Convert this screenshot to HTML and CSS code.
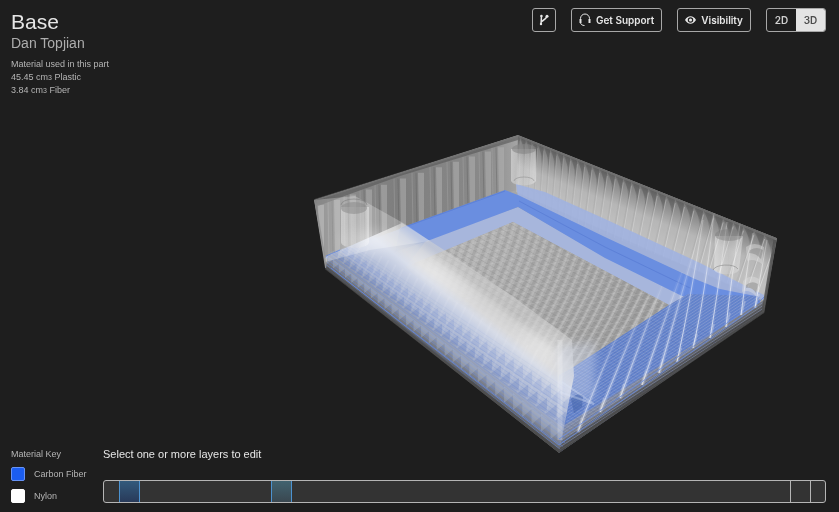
FILE: index.html
```html
<!DOCTYPE html>
<html lang="en">
<head>
<meta charset="utf-8">
<meta name="viewport" content="width=device-width, initial-scale=1">
<title>Base</title>
<link rel="stylesheet" href="styles.css">
</head>
<body>
<div class="viewer">
  <svg class="model" viewBox="0 0 839 512" role="img" aria-label="3D view of the part">
    <defs>
      <linearGradient id="near" gradientUnits="userSpaceOnUse" x1="440" y1="359" x2="491" y2="294">
        <stop offset="0" stop-color="#4b4c4f"/>
        <stop offset=".07" stop-color="#74777f"/>
        <stop offset=".14" stop-color="#8790a6"/>
        <stop offset=".3" stop-color="#a6b2d0"/>
        <stop offset=".5" stop-color="#bfc8de"/>
        <stop offset=".66" stop-color="#d9deea" stop-opacity=".95"/>
        <stop offset=".76" stop-color="#dededf" stop-opacity=".9"/>
        <stop offset=".9" stop-color="#dadada" stop-opacity=".8"/>
        <stop offset="1" stop-color="#d2d2d2" stop-opacity=".55"/>
      </linearGradient>
      <linearGradient id="backLeft" gradientUnits="userSpaceOnUse" x1="314" y1="0" x2="518" y2="0">
        <stop offset="0" stop-color="#6c6c6c"/>
        <stop offset=".15" stop-color="#8c8c8c"/>
        <stop offset=".4" stop-color="#7e7e7e"/>
        <stop offset=".85" stop-color="#8a8a8a"/>
        <stop offset="1" stop-color="#a5a5a5"/>
      </linearGradient>
      <linearGradient id="backRight" gradientUnits="userSpaceOnUse" x1="650" y1="187" x2="632" y2="232">
        <stop offset="0" stop-color="#5e5e5e"/>
        <stop offset=".3" stop-color="#858585"/>
        <stop offset=".6" stop-color="#adadad"/>
        <stop offset="1" stop-color="#b8b8b8"/>
      </linearGradient>
      <linearGradient id="edge" gradientUnits="userSpaceOnUse" x1="661" y1="383" x2="650" y2="367">
        <stop offset="0" stop-color="#3c3c3d"/>
        <stop offset=".35" stop-color="#606266"/>
        <stop offset=".55" stop-color="#7d8290"/>
        <stop offset="1" stop-color="#8490ae"/>
      </linearGradient>
      <linearGradient id="floorShade" gradientUnits="userSpaceOnUse" x1="440" y1="250" x2="620" y2="330">
        <stop offset="0" stop-color="#b8b8b8"/>
        <stop offset="1" stop-color="#a2a2a2"/>
      </linearGradient>
      <linearGradient id="rib" x1="0" y1="0" x2="0" y2="1">
        <stop offset="0" stop-color="#fff" stop-opacity=".08"/>
        <stop offset=".4" stop-color="#fff" stop-opacity=".4"/>
        <stop offset="1" stop-color="#fff" stop-opacity=".7"/>
      </linearGradient>
      <linearGradient id="ribRight" x1="0" y1="0" x2="0" y2="1">
        <stop offset="0" stop-color="#fff" stop-opacity=".3"/>
        <stop offset="1" stop-color="#fff" stop-opacity=".85"/>
      </linearGradient>
      <radialGradient id="glow">
        <stop offset="0" stop-color="#fff" stop-opacity=".4"/>
        <stop offset="1" stop-color="#fff" stop-opacity="0"/>
      </radialGradient>
      <linearGradient id="post">
        <stop offset="0" stop-color="#fff" stop-opacity=".4"/>
        <stop offset=".5" stop-color="#ddd" stop-opacity=".25"/>
        <stop offset="1" stop-color="#fff" stop-opacity=".4"/>
      </linearGradient>
      <filter id="soft" x="-5%" y="-5%" width="110%" height="110%"><feGaussianBlur stdDeviation=".5"/></filter>
      <filter id="softer" x="-20%" y="-20%" width="140%" height="140%"><feGaussianBlur stdDeviation="4"/></filter>
      <clipPath id="shell"><path d="M314 200 518 135 777 238 764 312 559 453 325 268Z"/></clipPath>
      <clipPath id="floor"><path d="M513 222 669 305 572 368 545 380 405 267Z"/></clipPath>
      <clipPath id="wallLeft"><path d="M314 200 518 135 516 186 325 256Z"/></clipPath>
      <clipPath id="wallRight"><path d="M518 135 777 238 764 297 518 200Z"/></clipPath>
      <clipPath id="nearWall"><path d="M325 268 330 252 370 240 400 222 515 295 597 343 597 390 559 453Z"/></clipPath>
      <clipPath id="nearStrip"><path d="M669 305 688 294 760 296 764 312 559 453 559 375 572 368Z"/></clipPath>
    </defs>
    <g filter="url(#soft)">
      <g clip-path="url(#shell)">
        <path fill="#a7a7a7" d="M314 200 518 135 777 238 764 312 559 453 325 268Z"/>
        <path fill="url(#backLeft)" d="M314 200 518 135 516 190 325 258Z"/>
        <g id="ribs-back-left" clip-path="url(#wallLeft)"></g>
        <path fill="#555" fill-opacity=".6" d="M314 200 518 135 518 140 400 176 350 194 318 206Z"/>
        <path fill="url(#backRight)" d="M518 135 777 238 764 300 516 192Z"/>
        <g id="ribs-back-right" clip-path="url(#wallRight)"></g>

        <path fill="#9fb2e2" fill-opacity=".85" d="M516 184 545 192 605 219 700 263 764 295 764 300 718 290 518 198Z"/>
        <path fill="#8ba6e2" d="M325 257 370 240 405 227 432 240 408 268 450 300 559 400 559 450Z"/>
        <path fill="#a7b6dc" d="M428 238 518 207 605 257 688 294 669 305 513 222 405 268Z"/>
        <path fill="#6a8ee0" d="M400 228 505 190 518 195 545 208 605 237 695 279 720 289 760 297 740 310 682 296 605 258 518 207 430 240 395 252Z"/>
        <path fill="none" stroke="#4f74cf" stroke-opacity=".5" d="M402 228 505 191M519 201 605 247 690 288"/>
        <path fill="url(#floorShade)" d="M513 222 669 305 572 368 545 380 405 267Z"/>
        <g id="weave" clip-path="url(#floor)"></g>
        <path fill="#6483cb" d="M669 305 688 294 758 296 764 312 559 453 559 375 572 368Z"/>
        <path fill="url(#edge)" d="M764 300 764 314 559 455 559 428 598 405Z"/>
        <g id="fibers-right" clip-path="url(#nearStrip)"></g>
        <g id="ribs-near-right"></g>

        <path fill="url(#near)" d="M325 272 328 255 350 246 402 223 455 257 515 298 572 340 574 376 559 453Z"/>
        <g id="ribs-near-left" clip-path="url(#nearWall)"></g>
        <path fill="#fff" fill-opacity=".25" d="M314 200 355 196 405 224 430 241 370 250 325 262Z"/>
        <g filter="url(#softer)">
          <ellipse cx="368" cy="242" rx="34" ry="19" fill="url(#glow)"/>
          <ellipse cx="435" cy="272" rx="58" ry="16" fill="url(#glow)" transform="rotate(34 435 272)"/>
          <ellipse cx="545" cy="347" rx="42" ry="24" fill="url(#glow)" transform="rotate(34 545 347)"/>
          <path d="M558 345 596 342 594 400 556 395Z" fill="#d5dcee" fill-opacity=".4"/>
        </g>
        <path fill="#3f5fa8" fill-opacity=".5" d="M571 399q6-7 12-3l-1 11-8 6z"/>
        <path stroke="#fff" stroke-opacity=".22" stroke-width="5" d="M560 340V440"/>
        <path fill="none" stroke="#dde4f6" stroke-opacity=".35" stroke-width="2" d="M562 382 594 404 560 392"/>
        <path fill="none" stroke="#6488df" stroke-opacity=".8" d="M331 268 400 322 559 445 757 306M326 256 340 250M559 439 740 314M757 304 764 297"/>
      </g>

      <path fill="url(#post)" d="M341 207V242a14 6 0 0 0 28 0V207Z"/>
      <ellipse cx="354" cy="208" rx="13" ry="6" fill="#8a8a8a" fill-opacity=".55"/>
      <path fill="none" stroke="#777" stroke-opacity=".5" d="M341 205a13 6 0 0 1 26 0"/>
      <path fill="url(#post)" d="M511 149V181a13 6 0 0 0 25 0V149Z"/>
      <ellipse cx="524" cy="149" rx="12" ry="5" fill="#858585" fill-opacity=".6"/>
      <path fill="none" stroke="#888" stroke-opacity=".5" d="M514 181a10 4 0 0 1 20 0"/>
      <path fill="url(#post)" d="M715 236 714 270a13 6 0 0 0 25 0L743 236Z"/>
      <ellipse cx="729" cy="235" rx="14" ry="6" fill="#777" fill-opacity=".4"/>
      <path fill="none" stroke="#888" stroke-opacity=".6" d="M713 270a13 6 0 0 1 25-1"/>
      <path fill="#ddd" fill-opacity=".45" d="M746 247q8-6 18 0l-2 17q-8-6-15-3zM743 281q8-8 16-2l-3 17q-7-7-14-4z"/>
      <path fill="#777" fill-opacity=".4" d="M750 250q7-4 13 0l-2 9q-5-6-12-6zM746 285q6-5 12-1l-2 9q-4-6-10-5z"/>
      <path fill="none" stroke="#7d7d7d" stroke-opacity=".5" stroke-width="2" stroke-linejoin="round" d="M326 268 315 200 518 136 776 239 763 312"/>
      <path fill="none" stroke="#4c4c4c" stroke-opacity=".8" stroke-width="3" stroke-linejoin="round" d="M326 268 559 451 763 312 775 240"/>
    </g>
  </svg>

  <header class="topbar">
    <div class="part">
      <h1 class="part-name">Base</h1>
      <p class="part-owner">Dan Topjian</p>
      <ul class="usage">
        <li>Material used in this part</li>
        <li>45.45 cm<span class="cube">3</span> Plastic</li>
        <li>3.84 cm<span class="cube">3</span> Fiber</li>
      </ul>
    </div>
    <div class="actions">
      <button class="btn btn-icon" type="button" aria-label="Branches">
        <svg width="10" height="12" viewBox="0 0 10 12" fill="none" stroke="currentColor"><path stroke-width="1.5" d="M2.500 1.500 2 10.500M2.200 8C3 6.500 6.500 6 8 2.500"/><circle cx="2.400" cy="1.900" r="1.200" fill="currentColor" stroke="none"/><circle cx="8" cy="2.300" r="1.500" fill="currentColor" stroke="none"/><circle cx="2" cy="10" r="1.200" fill="currentColor" stroke="none"/></svg>
      </button>
      <button class="btn" type="button">
        <svg width="12" height="14" viewBox="0 0 12 14" fill="none" stroke="currentColor"><path d="M1.500 8V5.500a4.500 4.500 0 0 1 9 0V8M1.500 9.500c0 2 2 3 4 3"/><path stroke-width="2" d="M1.500 6v4M10.500 6v4"/></svg>
        Get Support
      </button>
      <button class="btn" type="button">
        <svg width="11" height="10" viewBox="0 0 12 10"><path fill="currentColor" fill-rule="evenodd" d="M0 5Q2.300 1 6 1t6 4Q9.700 9 6 9T0 5ZM6 2a3 3 0 1 0 0 6 3 3 0 0 0 0-6Z"/><circle cx="6" cy="5" r="1.700" fill="currentColor"/></svg>
        Visibility
      </button>
      <div class="toggle" role="group" aria-label="View mode">
        <button class="mode" type="button" aria-pressed="false">2D</button>
        <button class="mode mode-on" type="button" aria-pressed="true">3D</button>
      </div>
    </div>
  </header>

  <footer class="bottombar">
    <section class="key">
      <h2 class="key-title">Material Key</h2>
      <ul class="key-list">
        <li><span class="swatch swatch-carbon"></span>Carbon Fiber</li>
        <li><span class="swatch swatch-nylon"></span>Nylon</li>
      </ul>
    </section>
    <section class="layers">
      <p class="hint">Select one or more layers to edit</p>
      <div class="timeline">
        <button class="layer" type="button" aria-label="Layer group 1"></button>
        <button class="layer fiber" type="button" aria-label="Layer group 2"></button>
        <button class="layer" type="button" aria-label="Layer group 3"></button>
        <button class="layer fiber fiber-pale" type="button" aria-label="Layer group 4"></button>
        <button class="layer" type="button" aria-label="Layer group 5"></button>
        <button class="layer split" type="button" aria-label="Layer group 6"></button>
        <button class="layer split" type="button" aria-label="Layer group 7"></button>
      </div>
    </section>
  </footer>
</div>
<script src="model.js"></script>
</body>
</html>
```
FILE: styles.css
```css
* { box-sizing: border-box; }

body {
  margin: 0;
  background: #1e1e1e;
  color: #e6e6e6;
  font-family: "Liberation Sans", Arial, sans-serif;
  font-size: 11px;
  line-height: 14px;
}

h1, h2, p, ul { margin: 0; padding: 0; font-weight: 400; }
ul { list-style: none; }

button {
  margin: 0;
  padding: 0;
  border: 0;
  background: none;
  color: inherit;
  font: inherit;
  cursor: pointer;
}

.viewer {
  position: relative;
  display: flex;
  flex-direction: column;
  justify-content: space-between;
  min-height: 100vh;
  overflow: hidden;
}

.model {
  position: absolute;
  inset: 0;
  width: 100%;
  height: 100%;
}

.topbar, .bottombar {
  position: relative;
  display: flex;
  justify-content: space-between;
  padding: 8px 13px 9px 11px;
}

.part-name { font-size: 21px; line-height: 28px; }
.part-owner { color: #adadad; font-size: 14px; line-height: 14px; }
.usage { margin-top: 8px; color: #b5b5b5; font-size: 9px; line-height: 13px; }
.cube { font-size: 7px; }

.actions { display: flex; align-items: flex-start; gap: 15px; }

.btn, .toggle {
  display: flex;
  align-items: center;
  height: 24px;
  border: 1px solid #a8a8a8;
  border-radius: 3px;
  font-family: Inter, "Liberation Sans", sans-serif;
  font-size: 10px;
  font-weight: 600;
}
.btn { gap: 5px; padding: 0 7px; }
.btn-icon { width: 24px; padding: 0; justify-content: center; }
.toggle { align-items: stretch; overflow: hidden; }
.mode { width: 29px; color: #d0d0d0; }
.mode-on { background: #e4e4e4; color: #4c4c4c; }

.bottombar { gap: 15px; }
.key { flex: none; width: 77px; color: #b5b5b5; font-size: 9px; }
.key-title { font-size: 9px; line-height: 14px; }
.key-list { display: grid; gap: 8px; margin-top: 6px; }
.key-list li { display: flex; align-items: center; gap: 9px; white-space: nowrap; }
.swatch { width: 14px; height: 14px; border: 1px solid #6793f5; border-radius: 2px; background: #1b5df0; }
.swatch-nylon { border-color: #fff; background: #fff; }

.layers { flex: 1; display: flex; flex-direction: column; justify-content: space-between; }
.timeline {
  display: grid;
  grid-template-columns: 15fr 21fr 131fr 21fr 498fr 20fr 15fr;
  height: 23px;
  border: 1px solid #b5b5b5;
  border-radius: 3px;
  background: #333;
  overflow: hidden;
}
.fiber { border: 1px solid #4c92d0; border-width: 0 1px; background: linear-gradient(#335a7c, #283a59); }
.fiber-pale { background: linear-gradient(#41626f, #3a4750); }
.split { border-left: 1px solid #b5b5b5; }
```
FILE: model.js
```js
const NS = "http://www.w3.org/2000/svg";

function draw(id, d, attrs) {
  const path = document.createElementNS(NS, "path");
  path.setAttribute("d", d);
  for (const name in attrs) path.setAttribute(name, attrs[name]);
  document.getElementById(id).appendChild(path);
}

const mix = (a, b, t) => a + (b - a) * t;
const along = (p, q, t) => [mix(p[0], q[0], t), mix(p[1], q[1], t)];

// Vertical ribs on the far left wall.
[318, 334, 350, 366, 381, 400, 418, 436, 453, 469, 485, 498].forEach((x) => {
  const t = (x - 314) / 204;
  const top = mix(206, 141, t);
  const bottom = mix(262, 192, t);
  draw("ribs-back-left", `M${x} ${top}h6L${x + 6} ${bottom}h-5Z`, { fill: "#b4b4b4", "fill-opacity": 0.5 });
  draw("ribs-back-left", `M${x - 6} ${top}L${x - 5} ${bottom}`, { stroke: "#aaa", "stroke-opacity": 0.4 });
  draw("ribs-back-left", `M${x - 2} ${top}L${x - 1} ${bottom}`, { stroke: "#5c5c5c", "stroke-opacity": 0.4 });
});

// Leaning ribs on the far right wall, growing wider toward the camera.
for (let i = 0; i < 32; i++) {
  const t = (i * 0.7 + i * i * 0.0105) / 32;
  const [x, y] = along([520, 137], [777, 240], t);
  const [bx, by] = along([518, 201], [756, 303], t);
  const w = mix(4, 8, t);
  draw("ribs-back-right", `M${x} ${y}l${w} ${w + 8}L${bx + w} ${by}h${-w}Z`, { fill: "#eee", "fill-opacity": 0.15 });
  draw("ribs-back-right", `M${x} ${y + 4}L${bx} ${by}`, { stroke: "#fff", "stroke-opacity": mix(0.1, 0.38, t) });
  draw("ribs-back-right", `M${x + 2} ${y}l${w} 3l-2 ${12 + w}Z`, { fill: "#555", "fill-opacity": 0.28 });
}

// Nylon infill grid on the floor.
for (let i = -24; i < 50; i++) {
  const x = 400 + i * 9;
  const strong = mix(0.1, 0.32, Math.min(1, Math.max(0, i) / 24));
  draw("weave", `M${x} 390Q${x + 70} 290 ${x + 90} 200`, { fill: "none", stroke: "#6e6e6e", "stroke-opacity": 0.18, "stroke-width": 3 });
  draw("weave", `M${x + 4} 390Q${x + 74} 290 ${x + 94} 200`, { fill: "none", stroke: "#e8e8e8", "stroke-opacity": strong, "stroke-width": 2 });
  draw("weave", `M${x - 100} 200L${x + 160} 356`, { stroke: "#777", "stroke-opacity": 0.18 });
  draw("weave", `M380 ${190 + i * 6}L700 ${126 + i * 6}`, { stroke: "#ddd", "stroke-opacity": 0.2 });
}

// Carbon strands beside the near right edge.
for (let i = 0; i < 60; i++) {
  draw("fibers-right", `M540 ${352 + i * 3}L770 ${202 + i * 3}`, { stroke: "#a4b2d6", "stroke-opacity": 0.4 });
  draw("fibers-right", `M540 ${250 + i * 5}L770 ${365 + i * 5}`, { stroke: "#3f5aa0", "stroke-opacity": 0.2 });
}

// Near right wall ribs: [foot, knee, head] as x, y pairs.
[
  [578, 432, 592, 392, 622, 325], [600, 412, 620, 362, 645, 304],
  [620, 398, 638, 348, 662, 286], [642, 385, 658, 338, 682, 272],
  [659, 373, 675, 318, 694, 250], [677, 362, 691, 298, 703, 220],
  [693, 348, 705, 296, 714, 213], [710, 338, 718, 292, 727, 222],
  [726, 327, 731, 280, 740, 224], [741, 315, 747, 268, 753, 233],
  [755, 308, 760, 278, 767, 240]
].forEach(([ax, ay, bx, by, cx, cy], i) => {
  const d = `M${ax} ${ay}Q${bx} ${by} ${cx} ${cy}`;
  const stroke = i < 5 ? "url(#rib)" : "url(#ribRight)";
  draw("ribs-near-right", d, { fill: "none", stroke, "stroke-opacity": i < 5 ? 0.3 : 0.1, "stroke-width": 4 });
  draw("ribs-near-right", d, { fill: "none", stroke, "stroke-opacity": 0.8, "stroke-width": 1.1 });
  draw("ribs-near-right", `M${ax} ${ay}l4 -14`, { stroke: "#eee", "stroke-opacity": 0.28, "stroke-width": 2 });
});

// Near left wall: strands parallel to the edge and sawtooth ribs.
for (let i = 0; i < 14; i++) {
  draw("ribs-near-left", `M320 ${263 - i * 3}L565 ${453 - i * 5}`, { stroke: "#6a8ada", "stroke-opacity": mix(0.55, 0.06, i / 13) });
}
for (let i = 0; i < 30; i++) {
  const t = (i * 0.75 + i * i * 0.0085) / 30;
  const [x, y] = along([327, 264], [559, 446], t);
  const w = mix(6, 11, t);
  const h = mix(9, 19, t);
  draw("ribs-near-left", `M${x} ${y}v${-h}l${w} ${h * 0.5}Z`, { fill: "#c5cad6", "fill-opacity": 0.25 });
  draw("ribs-near-left", `M${x + 5} ${y - h}l${w} ${-h * 0.5}v${h * 0.8}Z`, { fill: "#5676bf", "fill-opacity": 0.24 });
  draw("ribs-near-left", `M${x + 9} ${y - h * 1.8}l${w} ${-h * 0.5}v${h * 0.8}Z`, { fill: "#6f8cd0", "fill-opacity": 0.18 });
  draw("ribs-near-left", `M${x + 4} ${y - h}l${w * 2} ${-h * 2.5}`, { stroke: "#fff", "stroke-opacity": 0.08, "stroke-width": 2 });
}
```
